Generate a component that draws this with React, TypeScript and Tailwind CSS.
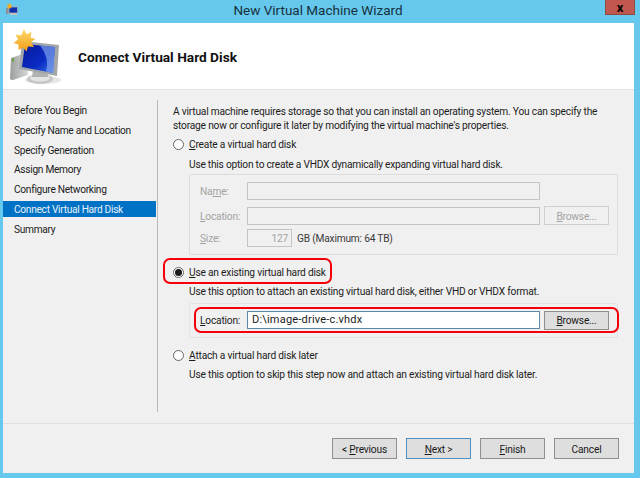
const navItems = [
  "Before You Begin",
  "Specify Name and Location",
  "Specify Generation",
  "Assign Memory",
  "Configure Networking",
  "Connect Virtual Hard Disk",
  "Summary",
];

function WizardIcon({ className }: { className?: string }) {
  return (
    <svg viewBox="10 27 54 56" className={className}>
      <defs>
        <linearGradient id="scr" x1="0" y1="0" x2="1" y2="1">
          <stop offset="0" stopColor="#08189a" />
          <stop offset="0.6" stopColor="#0a2bc4" />
          <stop offset="1" stopColor="#3a78e8" />
        </linearGradient>
        <linearGradient id="sun" x1="0" y1="0" x2="0" y2="1">
          <stop offset="0" stopColor="#fcdc70" />
          <stop offset="1" stopColor="#f39c12" />
        </linearGradient>
        <linearGradient id="twr" x1="0" y1="0" x2="1" y2="0">
          <stop offset="0" stopColor="#9c9e9e" />
          <stop offset="1" stopColor="#d6d7d7" />
        </linearGradient>
      </defs>
      {/* tower */}
      <path d="M11 56l15-5 2 22-15 5q-3 0-3-2z" fill="url(#twr)" />
      <rect x="12" y="56" width="2" height="4" fill="#6ea84a" />
      {/* stand */}
      <ellipse cx="43" cy="78" rx="18" ry="4" fill="#e6e6e6" />
      <ellipse cx="40" cy="77" rx="13" ry="5" fill="#c4c6c6" />
      <ellipse cx="40" cy="76" rx="10" ry="3.500" fill="#e2e3e3" />
      <path d="M33 68h14l1 7h-16z" fill="#b0b2b2" />
      {/* monitor */}
      <path d="M22 39l37 4-2 31-38-7z" fill="#a4a7a9" />
      <path d="M25 42l30 3-2 26-31-6z" fill="url(#scr)" />
      <path d="M40 43.500l15 1.500-2 26-7-1.500q4-13-6-26z" fill="#86a9ee" opacity="0.65" />
      {/* sun */}
      <path
        d="M24 27l2.500 5 5-2-1 5.500 5 1.500-4.500 3 3 5-6-.5-1.500 5-3.500-4-4.500 2.500 0-5.500-5-1.500 4.500-3.500-2.500-5 5.500 1z"
        fill="url(#sun)"
      />
    </svg>
  );
}

function SmallIcon() {
  return (
    <svg viewBox="0 0 12 12" className="w-3 h-3">
      <rect x="0" y="5" width="2.500" height="6" fill="#8d9090" />
      <rect x="3" y="4" width="8.500" height="6" fill="#1030b0" stroke="#a8abad" strokeWidth="0.8" />
      <rect x="4" y="10" width="7" height="2" fill="#c0c2c2" />
      <path d="M3 0l.8 1.500 1.600-.7-.4 1.700 1.500.7-1.500.8.300 1.500-1.600-.5-1 1-.4-1.500-1.600-.3 1-1.200-.8-1.500 1.700.3z" fill="#f5a81c" />
    </svg>
  );
}

function Radio({ checked, accessKey, rest }: { checked?: boolean; accessKey: string; rest: string }) {
  return (
    <div className="flex items-center h-[17px]">
      <span className="w-[11px] h-[11px] rounded-full border border-[#666666] bg-white flex items-center justify-center shrink-0">
        {checked && <span className="w-[7px] h-[7px] rounded-full bg-[#1b1b1b]" />}
      </span>
      <span className="ml-[5px] pt-[2px]">
        <u>{accessKey}</u>
        {rest}
      </span>
    </div>
  );
}

function Button({ k, rest, pre, className }: { k: string; rest: string; pre?: string; className?: string }) {
  return (
    <div className={`flex items-center justify-center border border-[#8f8f8f] bg-[#dedede] h-[21px] text-[#1a1a1a] shrink-0 ${className ?? ""}`}>
      <span className="pt-[2px]">
        {pre}
        <u>{k}</u>
        {rest}
      </span>
    </div>
  );
}

export default function App() {
  return (
    <div className="relative w-[640px] h-[478px] overflow-hidden bg-[#65c8ec] text-[10.2px] tracking-[-0.2px] leading-[16px] text-[#1c1c1c] font-['Roboto',sans-serif]">
      {/* Title bar */}
      <div className="relative h-[23px] flex items-center justify-center text-[13.500px] tracking-normal text-[#17323f]">
        <div className="absolute left-[6px] top-[3px]">
          <SmallIcon />
        </div>
        <span className="mt-[-4px] mr-[4px]">New Virtual Machine Wizard</span>
        <div className="absolute left-[605px] top-0 w-[30px] h-[15px] bg-[#c0584f] border border-[#8f4a44] border-t-0 flex items-center justify-center text-[13px] leading-none font-bold text-black">
          x
        </div>
      </div>

      <div className="ml-[3px] w-[631px] h-[450px] flex flex-col bg-[#f0f0f0]">
        {/* Header */}
        <div className="h-[67px] bg-white border-b border-[#e3e3e3] flex items-center shrink-0">
          <WizardIcon className="w-[54px] h-[56px] ml-[7px] mt-[1px] shrink-0" />
          <h1 className="ml-[14px] mt-[1px] text-[13.700px] tracking-normal font-bold text-[#111111]">Connect Virtual Hard Disk</h1>
        </div>

        {/* Body */}
        <div className="flex h-[333px] shrink-0">
          <nav className="w-[155px] mt-[10px] h-[312px] border-r border-[#b9b9b9] pt-[2px] pr-[1px] shrink-0 flex flex-col gap-[3.8px] tracking-[-0.3px]">
            {navItems.map((item) => (
              <div
                key={item}
                className={`h-[16px] pl-[11px] pt-[2px] flex items-center ${
                  item === "Connect Virtual Hard Disk" ? "bg-[#0072c6] text-[#e8f2fa]" : ""
                }`}
              >
                {item}
              </div>
            ))}
          </nav>

          <div className="flex-1 pl-[15px] pt-[15px]">
            <p className="w-[445px] leading-[13.500px]">
              A virtual machine requires storage so that you can install an operating system. You can specify the storage now or configure it later by modifying the virtual machine's properties.
            </p>

            <div className="mt-[3.500px]">
              <Radio accessKey="C" rest="reate a virtual hard disk" />
            </div>
            <p className="ml-[16px] mt-[4.500px] tracking-[-0.23px]">Use this option to create a VHDX dynamically expanding virtual hard disk.</p>

            {/* Disabled group */}
            <div className="ml-[16px] mt-[1px] w-[429px] h-[81px] border border-[#dcdcdc] rounded-[2px] pt-[7px] pl-[10px] text-[#a3a3a3]">
              <div className="flex items-center h-[18px]">
                <span className="w-[47px] pt-[2px]">Na<u>m</u>e:</span>
                <div className="w-[293px] h-[18px] border border-[#c4c4c4]" />
              </div>
              <div className="flex items-center h-[19px] mt-[6px]">
                <span className="w-[47px] pt-[2px]"><u>L</u>ocation:</span>
                <div className="w-[293px] h-[18px] border border-[#c4c4c4]" />
                <div className="ml-[4px] w-[65px] h-[19px] border border-[#d0d0d0] flex items-center justify-center"><span className="pt-[2px]"><u>B</u>rowse...</span></div>
              </div>
              <div className="flex items-center h-[18px] mt-[4px]">
                <span className="w-[47px] pt-[2px]"><u>S</u>ize:</span>
                <div className="w-[45px] h-[18px] border border-[#c4c4c4] text-right pr-[3px] pt-[1px] leading-[16px]">127</div>
                <span className="ml-[5px] pt-[2px] text-[#3a3a3a]">GB (Maximum: 64 TB)</span>
              </div>
            </div>

            <div className="mt-[8.500px]">
              <Radio checked accessKey="U" rest="se an existing virtual hard disk" />
            </div>
            <p className="ml-[16px] mt-[3.500px]">Use this option to attach an existing virtual hard disk, either VHD or VHDX format.</p>

            <div className="ml-[16px] mt-[3px] w-[429px] h-[35px] border border-[#e4e4e4] rounded-[2px] pt-[7px] pl-[10px]">
              <div className="flex items-center h-[18px]">
                <span className="w-[47px] pt-[2px]"><u>L</u>ocation:</span>
                <div className="w-[293px] h-[18px] border border-[#5b87a8] bg-white pl-[4px] text-[11px] leading-[16px] tracking-[0.2px]">
                  D:\image-drive-c.vhdx
                </div>
                <Button k="B" rest="rowse..." className="ml-[4px] w-[65px] !h-[19px]" />
              </div>
            </div>

            <div className="mt-[8.500px]">
              <Radio accessKey="A" rest="ttach a virtual hard disk later" />
            </div>
            <p className="ml-[16px] mt-[3.500px]">Use this option to skip this step now and attach an existing virtual hard disk later.</p>
          </div>
        </div>

        {/* Footer */}
        <div className="flex-1 border-t border-[#dfdfdf] flex justify-end items-start gap-[9px] pt-[14px] pr-[15px]">
          <Button pre="< " k="P" rest="revious" className="w-[65px]" />
          <Button k="N" rest="ext >" className="w-[65px] !border-[#4f8fc4]" />
          <Button k="F" rest="inish" className="w-[65px]" />
          <Button k="" rest="Cancel" className="w-[65px]" />
        </div>
      </div>

      {/* Red annotations */}
      <div className="absolute left-[163px] top-[258px] w-[169px] h-[26px] border-[2px] border-[#f5000a] rounded-[7px]" />
      <div className="absolute left-[194px] top-[307px] w-[425px] h-[26px] border-[2px] border-[#f5000a] rounded-[7px]" />
    </div>
  );
}
